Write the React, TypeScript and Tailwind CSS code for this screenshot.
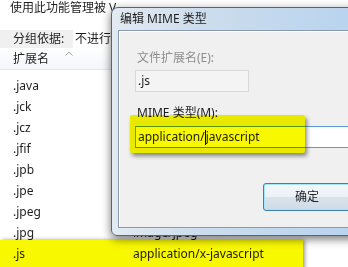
import React from "react";

const rows: [string, string][] = [
  [".java", ""],
  [".jck", ""],
  [".jcz", ""],
  [".jfif", ""],
  [".jpb", ""],
  [".jpe", ""],
  [".jpeg", ""],
  [".jpg", "image/jpeg"],
  [".js", "application/x-javascript"],
];

export default function App() {
  return (
    <div className="relative w-[348px] h-[267px] overflow-hidden bg-white text-[12px] text-[#1e1e1e] font-['Noto_Sans','Noto_Sans_CJK_SC',sans-serif]">
      {/* background window */}
      <div className="flex flex-col">
        <div className="h-[30px] pl-[10px] leading-[16px] whitespace-nowrap">
          使用此功能管理被 V
        </div>
        <div className="h-[18px] bg-[#f0f0f0] flex items-stretch pl-[13px] leading-[18px] whitespace-nowrap">
          <span className="w-[60px]">分组依据:</span>
          <span className="bg-white pl-[2px] pr-[20px]">不进行</span>
        </div>
        <div className="relative h-[22px] flex items-center pl-[13px] bg-[linear-gradient(#ffffff,#f3f7fb)] border-b border-[#e3e8ee]">
          <span>扩展名</span>
          <svg className="absolute left-[65px] top-[3px]" width="8" height="5" viewBox="0 0 8 5">
            <path d="M0.5 4.5 L4 1 L7.5 4.5" fill="none" stroke="#9aa3ad" strokeWidth="1" />
          </svg>
        </div>
        <div className="mt-[5px] flex flex-col">
          {rows.map(([ext, mime]) => (
            <div key={ext} className="h-[21px] flex items-center whitespace-nowrap">
              <span className="w-[133px] pl-[13px]">{ext}</span>
              <span>{mime}</span>
            </div>
          ))}
        </div>
      </div>

      {/* dialog */}
      <div className="absolute left-[111px] top-[7px] w-[252px] h-[229px] rounded-t-[7px] rounded-b-[6px] border border-[#566579] bg-[linear-gradient(to_right,#e3eaf1,#cddded_35%,#b7d3ef)] shadow-[0_3px_10px_rgba(0,0,0,0.55)] flex flex-col">
        <div className="h-[22px] pl-[8px] flex items-center whitespace-nowrap text-[#1e1e1e]">
          编辑 MIME 类型
        </div>
        <div className="ml-[6px] h-[198px] border border-[#8799b0] bg-[#f0f0f0] flex flex-col pl-[16px] shadow-[inset_1px_1px_0_#ffffff]">
          <div className="mt-[19px] h-[16px] leading-[16px] pl-[2px] text-[#8d8d8d] whitespace-nowrap">文件扩展名(E):</div>
          <div className="mt-[4px] w-[114px] h-[22px] border border-[#d9d9d9] bg-[#f4f4f4] flex items-center pl-[2px]">.js</div>
          <div className="mt-[13px] h-[16px] leading-[16px] pl-[2px] whitespace-nowrap">MIME 类型(M):</div>
          <div className="mt-[5px] w-[240px] h-[22px] border border-[#5b9bd5] border-l-[#7aa7d3] bg-white flex items-center pl-[2px] whitespace-nowrap">
            <span>application/</span>
            <span className="inline-block w-[1px] h-[15px] bg-black" />
            <span>javascript</span>
          </div>
          <div className="mt-[35px] ml-[128px] w-[88px] h-[28px] rounded-[3px] border border-[#3c7fb1] bg-[linear-gradient(#f4f8fb_0%,#ebf1f6_50%,#d9e3ec_50%,#cfdbe6_100%)] shadow-[inset_0_0_0_1px_#a6e5fb] flex items-center justify-center">
            确定
          </div>
        </div>
      </div>

      {/* highlights */}
      <div className="absolute left-[130px] top-[115px] w-[175px] h-[38px] rounded-[2px] bg-[#f8f800] mix-blend-multiply shadow-[2px_3px_4px_rgba(0,0,0,0.45)]" />
      <div className="absolute left-0 top-[240px] w-[303px] h-[30px] bg-[#f8f800] mix-blend-multiply shadow-[2px_0_4px_rgba(0,0,0,0.4)]" />
    </div>
  );
}
